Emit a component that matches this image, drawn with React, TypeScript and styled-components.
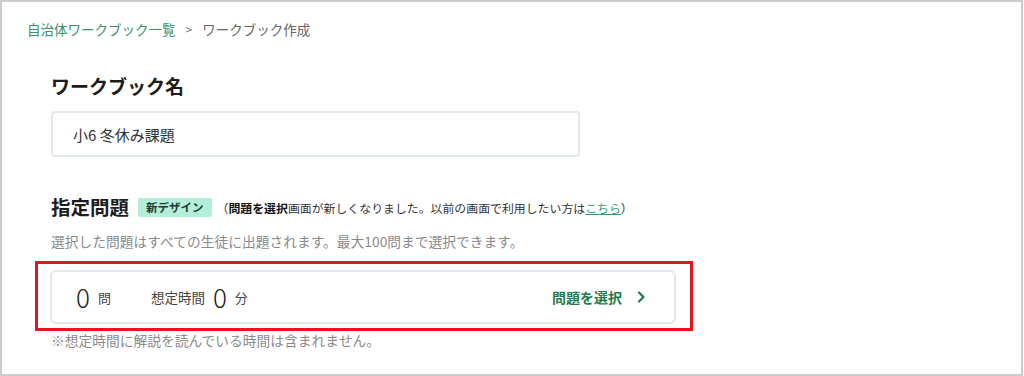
import React from 'react';
import styled, { createGlobalStyle } from 'styled-components';

const GlobalStyle = createGlobalStyle`
  html, body {
    margin: 0;
    padding: 0;
    background: #fff;
  }
  body {
    font-family: 'Noto Sans CJK JP', 'Noto Sans', sans-serif;
    color: #222;
  }
`;

const Frame = styled.div`
  box-sizing: border-box;
  width: 1023px;
  height: 376px;
  border: 2px solid #cbcbcb;
  padding: 17px 0 0 25px;
  overflow: hidden;
`;

const Breadcrumb = styled.nav`
  display: flex;
  align-items: center;
  gap: 10px;
  font-size: 13.5px;
  line-height: 20px;
  color: #666;
`;

const CrumbLink = styled.a`
  color: #3b8f69;
  text-decoration: none;
`;

const Separator = styled.span`
  color: #777;
  font-size: 12px;
`;

const Section = styled.section`
  padding-left: 24px;
`;

const Heading = styled.h2<{ $size?: number }>`
  margin: 0;
  font-size: ${(p) => p.$size ?? 19}px;
  line-height: 28px;
  font-weight: 700;
  color: #1c1c1c;
`;

const NameHeading = styled(Heading)`
  margin-top: 33px;
`;

const TextInput = styled.div`
  box-sizing: border-box;
  margin-top: 11px;
  width: 529px;
  height: 46px;
  border: 2px solid #e1e8ec;
  border-radius: 4px;
  padding: 0 20px;
  display: flex;
  align-items: center;
  font-size: 15px;
  color: #333;
`;

const TitleRow = styled.div`
  margin-top: 36px;
  display: flex;
  align-items: center;
`;

const Badge = styled.span`
  margin-left: 9px;
  height: 19px;
  padding: 0 8px;
  display: inline-flex;
  align-items: center;
  background: #b4eedb;
  border-radius: 2px;
  font-size: 11.5px;
  font-weight: 700;
  color: #1e3a30;
`;

const Notice = styled.span`
  margin-left: 5px;
  font-size: 11.9px;
  color: #333;

  b {
    font-weight: 700;
    color: #111;
  }
`;

const InlineLink = styled.a`
  color: #3a9a6e;
  text-decoration: underline;
`;

const Description = styled.p`
  margin: 10px 0 0;
  font-size: 13.75px;
  line-height: 20px;
  color: #8a8a8a;
`;

const Highlight = styled.div`
  box-sizing: border-box;
  margin: 10px 0 0 -16px;
  width: 658px;
  border: 3px solid #e5161d;
  padding: 6px 14px 4px 12px;
`;

const Card = styled.div`
  box-sizing: border-box;
  height: 54px;
  border: 2px solid #e1e8ec;
  border-radius: 6px;
  padding: 0 28px 0 24px;
  display: flex;
  align-items: center;
`;

const Stat = styled.div`
  display: flex;
  align-items: center;
  gap: 8px;

  & + & {
    margin-left: 40px;
  }
`;

const Number = styled.span`
  font-size: 26px;
  font-weight: 300;
  color: #222;
  line-height: 1;
`;

const Unit = styled.span`
  font-size: 13px;
  color: #444;
`;

const Label = styled.span`
  font-size: 13.5px;
  color: #444;
`;

const SelectButton = styled.button`
  margin-left: auto;
  display: flex;
  align-items: center;
  gap: 15px;
  border: none;
  background: none;
  padding: 0;
  font-family: inherit;
  font-size: 14px;
  font-weight: 700;
  color: #1f7a4d;
  cursor: pointer;
`;

const Footnote = styled.p`
  margin: 0;
  font-size: 13.75px;
  line-height: 18px;
  color: #8a8a8a;
`;

const Chevron = () => (
  <svg width="9" height="12" viewBox="0 0 9 12" fill="none">
    <polyline points="2,1.5 6.5,6 2,10.5" stroke="#1f7a4d" strokeWidth="2.2" strokeLinecap="round" strokeLinejoin="round" />
  </svg>
);

const App: React.FC = () => {
  return (
    <>
      <GlobalStyle />
      <Frame>
        <Breadcrumb>
          <CrumbLink href="#">自治体ワークブック一覧</CrumbLink>
          <Separator>&gt;</Separator>
          <span>ワークブック作成</span>
        </Breadcrumb>
        <Section>
          <NameHeading>ワークブック名</NameHeading>
          <TextInput>小6 冬休み課題</TextInput>

          <TitleRow>
            <Heading $size={19.5}>指定問題</Heading>
            <Badge>新デザイン</Badge>
            <Notice>
              （<b>問題を選択</b>画面が新しくなりました。以前の画面で利用したい方は
              <InlineLink href="#">こちら</InlineLink>）
            </Notice>
          </TitleRow>
          <Description>選択した問題はすべての生徒に出題されます。最大100問まで選択できます。</Description>

          <Highlight>
            <Card>
              <Stat>
                <Number>0</Number>
                <Unit>問</Unit>
              </Stat>
              <Stat>
                <Label>想定時間</Label>
                <Number>0</Number>
                <Unit>分</Unit>
              </Stat>
              <SelectButton>
                問題を選択
                <Chevron />
              </SelectButton>
            </Card>
          </Highlight>
          <Footnote>※想定時間に解説を読んでいる時間は含まれません。</Footnote>
        </Section>
      </Frame>
    </>
  );
};

export default App;
